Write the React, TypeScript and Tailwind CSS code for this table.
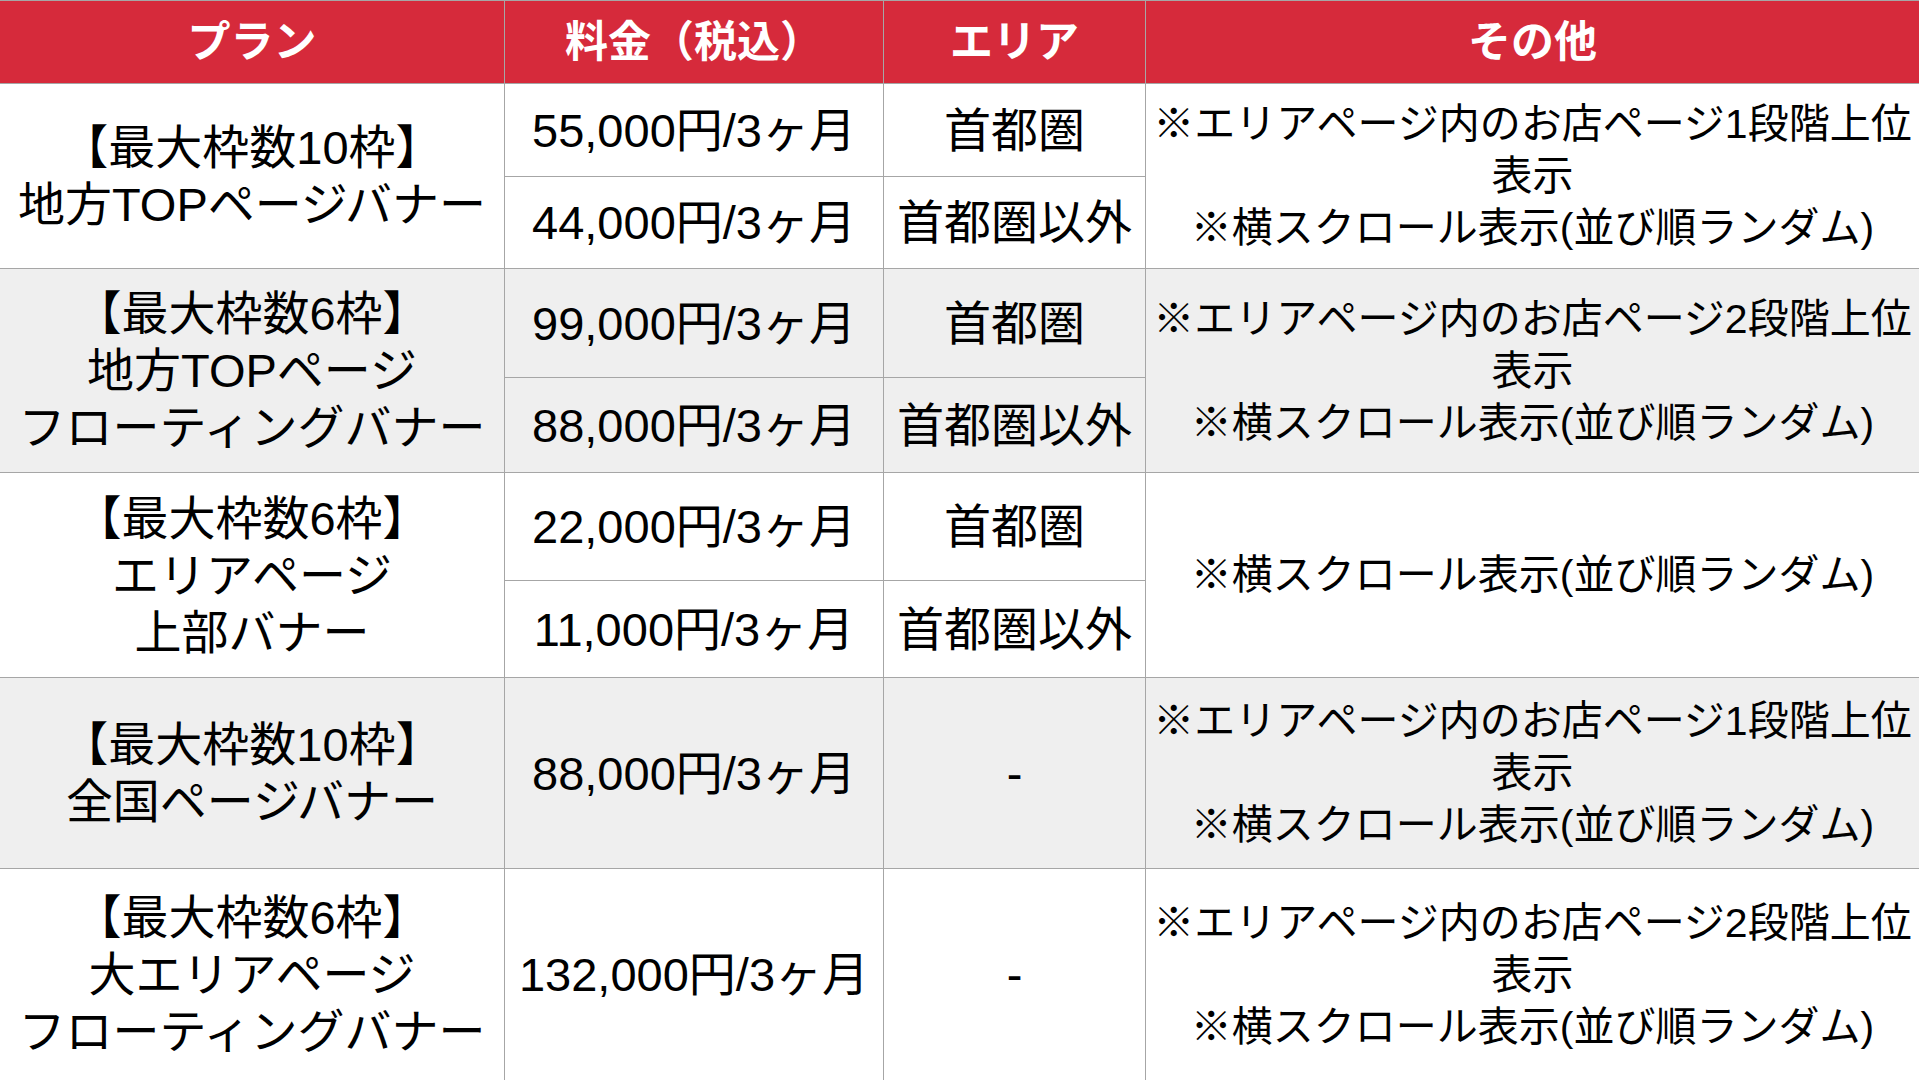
import React from "react";

const FONT = "font-['Liberation_Sans','Noto_Sans_CJK_JP',sans-serif]";

function Head({ col, children }: { col: string; children: React.ReactNode }) {
  return (
    <div
      className={`${col} row-start-1 flex items-center justify-center bg-[#d62a3b] text-white font-bold text-[43px] leading-none`}
    >
      {children}
    </div>
  );
}

function Cell({
  className,
  children,
  small,
}: {
  className: string;
  children: React.ReactNode;
  small?: boolean;
}) {
  return (
    <div
      className={`${className} flex items-center justify-center text-center text-black whitespace-nowrap ${
        small ? "text-[41px] leading-[52px]" : "text-[47px] leading-[57px]"
      }`}
    >
      <div>{children}</div>
    </div>
  );
}

const OTHER_LONG = (
  <>
    ※エリアページ内のお店ページ1段階上位
    <br />
    表示
    <br />
    ※横スクロール表示(並び順ランダム)
  </>
);
const OTHER_LONG2 = (
  <>
    ※エリアページ内のお店ページ2段階上位
    <br />
    表示
    <br />
    ※横スクロール表示(並び順ランダム)
  </>
);

export default function App() {
  const w = "bg-white";
  const g = "bg-[#efefef]";
  return (
    <div className={`${FONT} w-[1919px] h-[1080px] overflow-hidden bg-[#a6a6a6] pt-px`}>
      <div className="grid h-full gap-px grid-cols-[504px_378px_261px_1fr] grid-rows-[82px_92px_91px_108px_94px_107px_96px_190px_1fr]">
        <Head col="col-start-1">プラン</Head>
        <Head col="col-start-2">料金（税込）</Head>
        <Head col="col-start-3">エリア</Head>
        <Head col="col-start-4">その他</Head>

        {/* Row 1 */}
        <Cell className={`${w} col-start-1 row-start-2 row-span-2`}>
          【最大枠数10枠】
          <br />
          地方TOPページバナー
        </Cell>
        <Cell className={`${w} col-start-2 row-start-2`}>55,000円/3ヶ月</Cell>
        <Cell className={`${w} col-start-3 row-start-2`}>首都圏</Cell>
        <Cell small className={`${w} col-start-4 row-start-2 row-span-2`}>
          {OTHER_LONG}
        </Cell>
        <Cell className={`${w} col-start-2 row-start-3`}>44,000円/3ヶ月</Cell>
        <Cell className={`${w} col-start-3 row-start-3`}>首都圏以外</Cell>

        {/* Row 2 */}
        <Cell className={`${g} col-start-1 row-start-4 row-span-2`}>
          【最大枠数6枠】
          <br />
          地方TOPページ
          <br />
          フローティングバナー
        </Cell>
        <Cell className={`${g} col-start-2 row-start-4`}>99,000円/3ヶ月</Cell>
        <Cell className={`${g} col-start-3 row-start-4`}>首都圏</Cell>
        <Cell small className={`${g} col-start-4 row-start-4 row-span-2`}>
          {OTHER_LONG2}
        </Cell>
        <Cell className={`${g} col-start-2 row-start-5`}>88,000円/3ヶ月</Cell>
        <Cell className={`${g} col-start-3 row-start-5`}>首都圏以外</Cell>

        {/* Row 3 */}
        <Cell className={`${w} col-start-1 row-start-6 row-span-2`}>
          【最大枠数6枠】
          <br />
          エリアページ
          <br />
          上部バナー
        </Cell>
        <Cell className={`${w} col-start-2 row-start-6`}>22,000円/3ヶ月</Cell>
        <Cell className={`${w} col-start-3 row-start-6`}>首都圏</Cell>
        <Cell small className={`${w} col-start-4 row-start-6 row-span-2`}>
          ※横スクロール表示(並び順ランダム)
        </Cell>
        <Cell className={`${w} col-start-2 row-start-7`}>11,000円/3ヶ月</Cell>
        <Cell className={`${w} col-start-3 row-start-7`}>首都圏以外</Cell>

        {/* Row 4 */}
        <Cell className={`${g} col-start-1 row-start-8`}>
          【最大枠数10枠】
          <br />
          全国ページバナー
        </Cell>
        <Cell className={`${g} col-start-2 row-start-8`}>88,000円/3ヶ月</Cell>
        <Cell className={`${g} col-start-3 row-start-8`}>-</Cell>
        <Cell small className={`${g} col-start-4 row-start-8`}>
          {OTHER_LONG}
        </Cell>

        {/* Row 5 */}
        <Cell className={`${w} col-start-1 row-start-9`}>
          【最大枠数6枠】
          <br />
          大エリアページ
          <br />
          フローティングバナー
        </Cell>
        <Cell className={`${w} col-start-2 row-start-9`}>132,000円/3ヶ月</Cell>
        <Cell className={`${w} col-start-3 row-start-9`}>-</Cell>
        <Cell small className={`${w} col-start-4 row-start-9`}>
          {OTHER_LONG2}
        </Cell>
      </div>
    </div>
  );
}
